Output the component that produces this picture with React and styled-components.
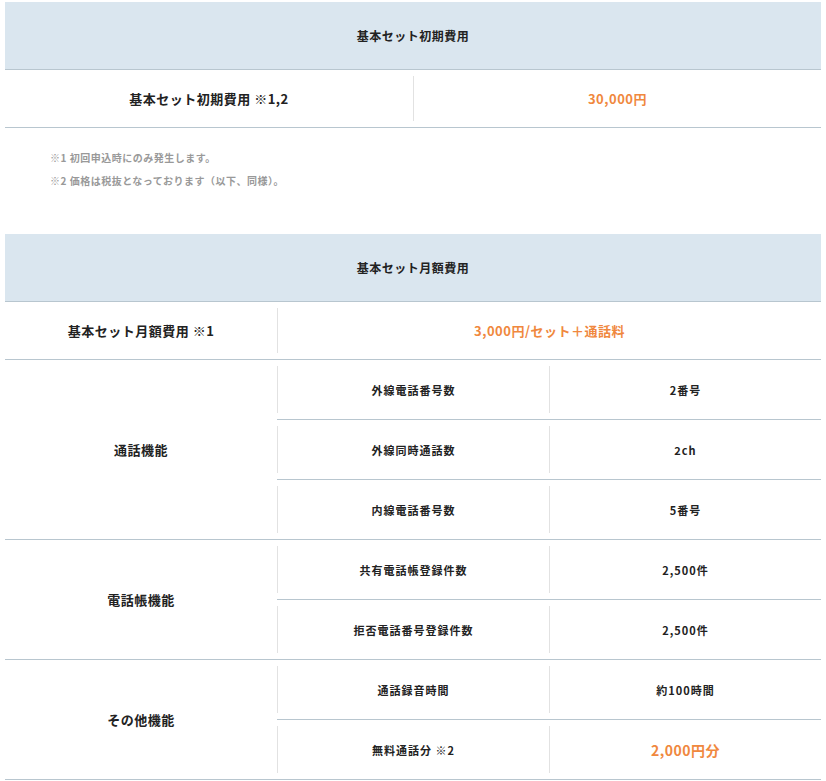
import React from 'react';
import styled, { createGlobalStyle } from 'styled-components';

const GlobalStyle = createGlobalStyle`
  body {
    margin: 0;
    background: #fff;
    font-family: "Noto Sans CJK JP", "Noto Sans", sans-serif;
    color: #222;
  }
`;

const Page = styled.div`
  padding: 2px 5px 0 5px;
  width: 816px;
`;

const Table = styled.div`
  margin-bottom: ${p => p.gap || 0}px;
`;

const Head = styled.div`
  background: #dae6ef;
  height: 67px;
  display: flex;
  align-items: center;
  justify-content: center;
  font-size: 12px;
  font-weight: 700;
  letter-spacing: 0.5px;
  border-bottom: 1px solid #b8c6cf;
`;

const Row = styled.div`
  display: grid;
  grid-template-columns: ${p => p.cols};
  border-bottom: 1px solid #b8c6cf;
`;

const Cell = styled.div`
  padding: 6px 0;
  height: ${p => p.h || 47}px;
`;

const Inner = styled.div`
  height: 100%;
  display: flex;
  align-items: center;
  justify-content: center;
  border-left: ${p => (p.first ? 'none' : '1px solid #e2e2e2')};
  font-size: ${p => (p.small ? 11 : 13)}px;
  font-weight: 700;
  letter-spacing: ${p => (p.small ? 1 : 0.5)}px;
  color: ${p => (p.accent ? '#f0883e' : '#222')};
`;

const GroupLabel = styled.div`
  display: flex;
  align-items: center;
  justify-content: center;
  font-size: 13px;
  font-weight: 700;
  letter-spacing: 0.5px;
`;

const SubList = styled.div`
  display: flex;
  flex-direction: column;
`;

const SubRow = styled.div`
  display: grid;
  grid-template-columns: 1fr 1fr;
  border-bottom: ${p => (p.last ? 'none' : '1px solid #b8c6cf')};
`;

const Notes = styled.div`
  padding: 22px 0 0 45px;
  height: 84px;
`;

const Note = styled.p`
  margin: 0 0 7px;
  font-size: 10px;
  line-height: 16px;
  font-weight: 700;
  color: #999;
  letter-spacing: 0.5px;
`;

const Big = styled.span`
  font-size: 14px;
`;

const groups = [
  {
    label: '通話機能',
    items: [
      ['外線電話番号数', '2番号'],
      ['外線同時通話数', '2ch'],
      ['内線電話番号数', '5番号'],
    ],
  },
  {
    label: '電話帳機能',
    items: [
      ['共有電話帳登録件数', '2,500件'],
      ['拒否電話番号登録件数', '2,500件'],
    ],
  },
  {
    label: 'その他機能',
    items: [
      ['通話録音時間', '約100時間'],
      ['無料通話分 ※2', '2,000円分', true],
    ],
  },
];

const App = () => (
  <Page>
    <GlobalStyle />
    <Table>
      <Head>基本セット初期費用</Head>
      <Row cols="408px 1fr">
        <Cell h={45}><Inner first>基本セット初期費用 ※1,2</Inner></Cell>
        <Cell h={45}><Inner accent>30,000円</Inner></Cell>
      </Row>
    </Table>
    <Notes>
      <Note>※1 初回申込時にのみ発生します。</Note>
      <Note>※2 価格は税抜となっております（以下、同様）。</Note>
    </Notes>
    <Table>
      <Head>基本セット月額費用</Head>
      <Row cols="272px 1fr">
        <Cell h={45}><Inner first>基本セット月額費用 ※1</Inner></Cell>
        <Cell h={45}><Inner accent>3,000円/セット＋通話料</Inner></Cell>
      </Row>
      {groups.map(g => (
        <Row cols="272px 1fr" key={g.label}>
          <GroupLabel>{g.label}</GroupLabel>
          <SubList>
            {g.items.map(([name, value, accent], i) => (
              <SubRow key={name} last={i === g.items.length - 1}>
                <Cell><Inner small>{name}</Inner></Cell>
                <Cell>
                  <Inner small={!accent} accent={accent}>
                    {accent ? <Big>{value}</Big> : value}
                  </Inner>
                </Cell>
              </SubRow>
            ))}
          </SubList>
        </Row>
      ))}
    </Table>
  </Page>
);

export default App;
